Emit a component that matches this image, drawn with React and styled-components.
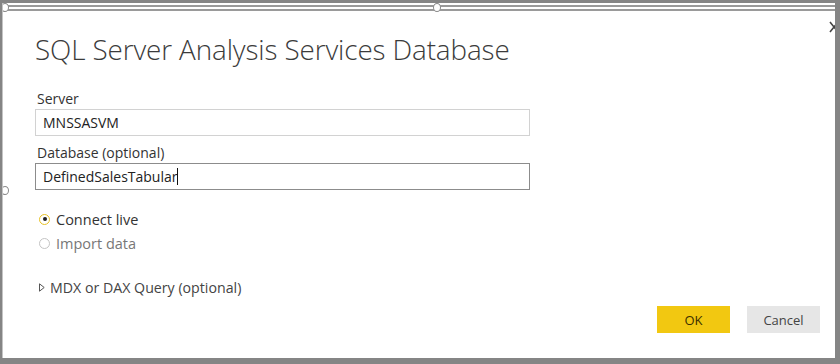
import React from "react";
import styled, { createGlobalStyle } from "styled-components";

const GlobalStyle = createGlobalStyle`
  html, body {
    margin: 0;
    padding: 0;
    background: #858585;
  }
  body {
    font-family: "Open Sans", "Liberation Sans", sans-serif;
  }
`;

const Screen = styled.div`
  width: 840px;
  height: 364px;
  box-sizing: border-box;
  padding: 3px 5px 6px 2px;
  background: #858585;
`;

const Canvas = styled.div`
  position: relative;
  height: 100%;
  background: #fff;
  overflow: hidden;
  border-left: 1px solid #c4c4c4;
`;

const SelectionFrame = styled.div`
  height: 100%;
  box-sizing: border-box;
  padding-top: 2px;
  display: flex;
  flex-direction: column;
`;

const FrameLine = styled.div`
  height: ${(p) => p.h || 1}px;
  margin-top: ${(p) => p.gap || 0}px;
  background: #9a9a9a;
  flex: none;
`;

const Handle = styled.span`
  position: absolute;
  width: 8px;
  height: 9px;
  border: 1.5px solid #8a8a8a;
  border-radius: 50%;
  background: #fff;
  box-sizing: border-box;
  left: ${(p) => p.x}px;
  top: ${(p) => p.y}px;
`;

const CloseGlyph = styled.svg`
  position: absolute;
  right: -4px;
  top: 18px;
`;

const Dialog = styled.div`
  flex: 1;
  display: flex;
  flex-direction: column;
  padding: 20px 0 0 32px;
`;

const Title = styled.h1`
  margin: 0 0 23px;
  font-family: "Open Sans", "Liberation Sans", sans-serif;
  font-weight: 300;
  font-size: 27.8px;
  line-height: 36px;
  color: #3b3b3b;
  letter-spacing: -0.1px;
`;

const Label = styled.div`
  font-size: 14px;
  line-height: 17px;
  color: #333;
  margin-left: 2px;
  margin-bottom: ${(p) => p.mb || 2}px;
`;

const TextBox = styled.div`
  width: 495px;
  height: 27px;
  box-sizing: border-box;
  border: 1px solid ${(p) => (p.focused ? "#8c8c8c" : "#d2d2d2")};
  padding: 0 7px;
  display: flex;
  align-items: center;
  font-size: 14px;
  color: #222;
  margin-bottom: ${(p) => p.mb || 0}px;
`;

const Caret = styled.span`
  display: inline-block;
  width: 1px;
  height: 17px;
  background: #111;
`;

const RadioGroup = styled.div`
  margin-top: 20px;
  display: flex;
  flex-direction: column;
  gap: 6px;
  margin-left: 4px;
`;

const RadioRow = styled.div`
  display: flex;
  align-items: center;
  gap: 6px;
  height: 18px;
  font-size: 14.5px;
  color: ${(p) => (p.checked ? "#333" : "#777")};
`;

const RadioDot = styled.span`
  width: 11px;
  height: 11px;
  box-sizing: border-box;
  border-radius: 50%;
  border: 1px solid ${(p) => (p.checked ? "#e8c224" : "#c4c4c4")};
  display: flex;
  align-items: center;
  justify-content: center;
  &::after {
    content: "";
    width: 4px;
    height: 4px;
    border-radius: 50%;
    background: ${(p) => (p.checked ? "#222" : "transparent")};
  }
`;

const Expander = styled.div`
  margin-top: 26px;
  display: flex;
  align-items: center;
  gap: 5px;
  font-size: 14.2px;
  color: #444;
  margin-left: 4px;
`;

const Footer = styled.div`
  display: flex;
  justify-content: flex-end;
  gap: 17px;
  padding-right: 15px;
  margin-top: 9px;
`;

const Button = styled.button`
  width: 73px;
  height: 27px;
  border: none;
  font-family: "Open Sans", "Liberation Sans", sans-serif;
  font-size: 13px;
  color: ${(p) => (p.primary ? "#3a3000" : "#444")};
  background: ${(p) => (p.primary ? "#f2c811" : "#e6e6e6")};
  padding: 0;
`;

export default function App() {
  return (
    <>
      <GlobalStyle />
      <Screen>
        <Canvas>
          <SelectionFrame>
            <FrameLine h={2} />
            <FrameLine h={2} gap={2} />
            <Dialog>
              <Title>SQL Server Analysis Services Database</Title>
              <Label>Server</Label>
              <TextBox mb={8}>MNSSASVM</TextBox>
              <Label>Database (optional)</Label>
              <TextBox focused>
                DefinedSalesTabular
                <Caret />
              </TextBox>
              <RadioGroup>
                <RadioRow checked>
                  <RadioDot checked />
                  Connect live
                </RadioRow>
                <RadioRow>
                  <RadioDot />
                  Import data
                </RadioRow>
              </RadioGroup>
              <Expander>
                <svg width="6" height="9" viewBox="0 0 6 9">
                  <path d="M0.5 0.8 L5.2 4.5 L0.5 8.2 Z" fill="none" stroke="#555" strokeWidth="1" />
                </svg>
                MDX or DAX Query (optional)
              </Expander>
              <Footer>
                <Button primary>OK</Button>
                <Button>Cancel</Button>
              </Footer>
            </Dialog>
          </SelectionFrame>
          <Handle x={-2} y={0} />
          <Handle x={430} y={0} />
          <Handle x={-2} y={183} />
          <CloseGlyph width="10" height="12" viewBox="0 0 10 12">
            <path d="M1 1 L9 11 M9 1 L1 11" stroke="#444" strokeWidth="1.6" />
          </CloseGlyph>
        </Canvas>
      </Screen>
    </>
  );
}
